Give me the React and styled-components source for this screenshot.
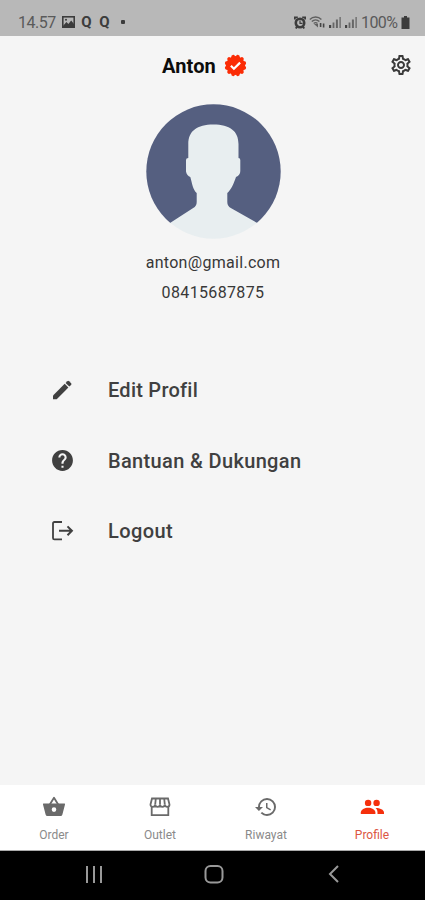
import styled, { createGlobalStyle } from "styled-components";
import { MdHelp, MdHistory, MdOutlineSettings } from "react-icons/md";

const GlobalStyle = createGlobalStyle`
  * {
    box-sizing: border-box;
  }
  body {
    margin: 0;
    font-family: Roboto, "Liberation Sans", sans-serif;
    background: #f5f5f5;
  }
`;

const Screen = styled.div`
  width: 425px;
  height: 900px;
  display: flex;
  flex-direction: column;
  overflow: hidden;
  background: #f5f5f5;
`;

const StatusBar = styled.div`
  height: 36px;
  flex-shrink: 0;
  display: flex;
  justify-content: space-between;
  padding: 12px 15px 0 18px;
  background: #b8b8b8;
`;

const StatusGroup = styled.div`
  display: flex;
  align-items: center;
  gap: ${(p) => p.$gap}px;
  height: 20px;
  color: #3c3c3c;
  svg {
    display: block;
    flex-shrink: 0;
  }
`;

const StatusText = styled.span`
  width: ${(p) => p.$width}px;
  font-size: 16px;
  letter-spacing: ${(p) => p.$spacing || 0}px;
  line-height: 20px;
  padding-top: 1px;
  white-space: nowrap;
  color: #5a5a5a;
`;

const AppMark = styled.span`
  width: 13px;
  font-size: 15px;
  font-weight: 700;
  line-height: 18px;
  text-align: center;
`;

const Dot = styled.span`
  width: 4px;
  height: 4px;
  margin-left: 5px;
  border-radius: 1px;
  background: #3c3c3c;
`;

const Header = styled.header`
  height: 58px;
  flex-shrink: 0;
  display: grid;
  grid-template-columns: 1fr auto 1fr;
  align-items: center;
  padding: 1px 12px 0 0;
`;

const Name = styled.h1`
  grid-column: 2;
  display: flex;
  align-items: center;
  gap: 8px;
  margin: 0;
  padding-right: 4px;
  font-size: 20px;
  font-weight: 700;
  line-height: 24px;
  letter-spacing: 0.1px;
  color: #0c0c0c;
`;

const SettingsButton = styled.button`
  justify-self: end;
  display: flex;
  padding: 0 0 2px;
  border: 0;
  background: none;
  color: #3a3a3a;
`;

const ProfileCard = styled.section`
  height: 261px;
  flex-shrink: 0;
  display: flex;
  flex-direction: column;
  align-items: center;
  padding: 10px 0 0 1px;
`;

const Avatar = styled.svg`
  width: 135px;
  height: 135px;
  margin-bottom: 9px;
`;

const Contact = styled.p`
  margin: 0;
  font-size: 16px;
  line-height: 30px;
  letter-spacing: ${(p) => p.$spacing || 0}px;
  color: #383838;
`;

const Menu = styled.nav`
  flex: 1;
  display: flex;
  flex-direction: column;
`;

const MenuItem = styled.a`
  height: 70.4px;
  display: grid;
  grid-template-columns: 24px 1fr;
  column-gap: 34px;
  align-items: center;
  padding-left: 50px;
  font-size: 20px;
  font-weight: 500;
  letter-spacing: ${(p) => p.$spacing || 0}px;
  color: #404040;
  svg {
    justify-self: center;
  }
`;

const TabBar = styled.nav`
  height: 66px;
  flex-shrink: 0;
  display: grid;
  grid-template-columns: repeat(4, 1fr);
  padding-left: 1px;
  background: #fff;
  border-bottom: 1px solid #aaa;
`;

const Tab = styled.a`
  display: flex;
  flex-direction: column;
  align-items: center;
  padding-top: 10px;
  font-size: 12px;
  line-height: 14px;
  color: ${(p) => (p.$active ? "#dc5643" : "#8a8a8a")};
  svg {
    margin-bottom: 9px;
    color: ${(p) => (p.$active ? "#f52f0c" : "#6a6a6a")};
  }
`;

const SystemBar = styled.div`
  height: 49px;
  flex-shrink: 0;
  display: grid;
  grid-template-columns: 120px 120px 120px;
  justify-content: center;
  align-items: center;
  justify-items: center;
  padding: 0 0 3px 2px;
  background: #000;
`;

const PictureIcon = () => (
  <svg width="13" height="12" viewBox="0 0 13 12" fill="none">
    <rect x=".8" y=".8" width="11.4" height="10.4" stroke="currentColor" strokeWidth="1.6" />
    <path d="M1 10 4.4 6l2 2 2.8-3.4L12 8v3H1z" fill="currentColor" />
    <circle cx="4" cy="3.8" r="1" fill="currentColor" />
  </svg>
);

const AlarmIcon = () => (
  <svg width="12" height="13" viewBox="0 0 12 13" fill="none">
    <path d="M.8 3.600V1.400h3M11.200 3.600V1.400h-3M1.800 12.500l1.200-2M10.200 12.500 9 10.500" stroke="currentColor" strokeWidth="1.800" />
    <circle cx="6" cy="7" r="4.200" stroke="currentColor" strokeWidth="2.600" />
    <path d="M6 4.500v2.800h2.500" stroke="currentColor" strokeWidth="1.200" />
  </svg>
);

const WifiIcon = () => (
  <svg width="17" height="14" viewBox="0 0 17 14" fill="none" stroke="#606060">
    <path d="M.8 4.400C4 1.200 9.200 1.200 12.400 4.400M2.800 6.500c2.200-2.100 5.400-2.100 7.600 0M4.700 8.500c1.100-1 2.700-1 3.800 0" strokeWidth="1.400" />
    <path d="M5 9h4v3.500z" fill="#606060" stroke="none" />
    <path d="M11.600 8v4M14.600 8.500v4" strokeWidth="1.600" stroke="#444" />
  </svg>
);

const SignalIcon = () => (
  <svg width="13" height="12" viewBox="0 0 13 12">
    <path d="M0 9h2.200v3H0z" fill="#444" />
    <path d="M3.600 6.500h1.800V12H3.600zM6.900 3.500h2V12h-2z" fill="#666" />
    <path d="M10.300 1H12v11h-1.700z" fill="#7a7a7a" />
  </svg>
);

const BatteryIcon = () => (
  <svg width="9" height="13" viewBox="0 0 9 13">
    <path d="M3 0h3v1.500h2.500V13H.5V1.500H3z" fill="currentColor" />
  </svg>
);

// twelve rounded bumps around the disc
const VerifiedBadge = () => (
  <svg width="23" height="23" viewBox="0 0 23 23">
    <g fill="#fb2c05">
      <circle cx="11.500" cy="11.500" r="9.600" />
      {Array.from({ length: 12 }, (_, i) => (
        <circle
          key={i}
          cx="11.500"
          cy="2.400"
          r="1.850"
          transform={`rotate(${i * 30 + 15} 11.500 11.500)`}
        />
      ))}
    </g>
    <path d="m6.900 11.800 3 3 6.200-6.200" fill="none" stroke="#fff" strokeWidth="2.200" />
  </svg>
);

const PencilIcon = () => (
  <svg width="24" height="24" viewBox="0 0 24 24" fill="currentColor">
    <path d="M3 17.500 14.700 5.800l3.700 3.700L6.700 21.200H3z" />
    <path d="m15.600 4.900 1.700-1.700q.9-.8 1.800 0l2 2q.8.900 0 1.700l-1.800 1.700z" />
  </svg>
);

const LogoutIcon = () => (
  <svg width="24" height="24" viewBox="0 0 24 24" fill="none" stroke="currentColor">
    <path d="M12 3H4.400Q3 3 3 4.400v14.600Q3 20.400 4.400 20.400H12" strokeWidth="1.800" />
    <path d="M9 11.800h12.500M17.500 7.400l4.400 4.400-4.400 4.400" strokeWidth="2" />
  </svg>
);

const BasketIcon = () => (
  <svg width="24" height="24" viewBox="0 0 24 24" fill="none">
    <path d="m7.800 9.500 4.200-6.700 4.200 6.700" stroke="currentColor" strokeWidth="1.800" strokeLinejoin="round" />
    <path
      fillRule="evenodd"
      d="M1.500 8.500h21q.7 0 .5.900l-2.600 10Q20 21 18.600 21H5.400Q4 21 3.600 19.400L1 9.400q-.2-.9.500-.9zM12 12.300a2.300 2.300 0 1 0 0 4.600 2.300 2.300 0 0 0 0-4.600z"
      fill="currentColor"
    />
  </svg>
);

const OutletIcon = () => (
  <svg width="24" height="24" viewBox="0 0 24 24" fill="none" stroke="currentColor" strokeWidth="1.800">
    <path d="M4 3.500h16l1.500 6q0 2.300-2.300 2.300-2.300 0-2.400-2.300 0 2.300-2.400 2.300T12 9.500q0 2.300-2.400 2.300T7.200 9.500q0 2.300-2.400 2.300T2.500 9.500z" />
    <path d="M7.800 3.500 7.200 9.500M12 3.500v6M16.200 3.500l.6 6M3.700 12v8.200h16.600V12" />
  </svg>
);

const PeopleIcon = () => (
  <svg width="24" height="24" viewBox="0 0 24 24" fill="currentColor">
    <circle cx="8.100" cy="7.900" r="3.200" />
    <circle cx="16.600" cy="7.900" r="3.200" />
    <path d="M.8 19v-1.500c0-2.900 4-4.700 7.300-4.700s7.300 1.800 7.300 4.700V19z" />
    <path d="M15.600 12.900c4.300 0 8.400 1.700 8.400 4.600V19h-6.500v-1.600c0-1.900-.5-3.200-1.900-4.500z" />
  </svg>
);

const menuItems = [
  { label: "Edit Profil", icon: <PencilIcon />, spacing: 0.25 },
  { label: "Bantuan & Dukungan", icon: <MdHelp size={25} />, spacing: 0.35 },
  { label: "Logout", icon: <LogoutIcon />, spacing: 0.4 },
];

const tabs = [
  { label: "Order", icon: <BasketIcon /> },
  { label: "Outlet", icon: <OutletIcon /> },
  { label: "Riwayat", icon: <MdHistory size={24} /> },
  { label: "Profile", icon: <PeopleIcon />, active: true },
];

const App = () => {
  return (
    <>
      <GlobalStyle />
      <Screen>
        <StatusBar>
          <StatusGroup $gap={5}>
            <StatusText $width={39} $spacing={-0.5}>14.57</StatusText>
            <PictureIcon />
            <AppMark>Q</AppMark>
            <AppMark>Q</AppMark>
            <Dot />
          </StatusGroup>
          <StatusGroup $gap={3}>
            <AlarmIcon />
            <WifiIcon />
            <SignalIcon />
            <SignalIcon />
            <StatusText $width={37} $spacing={-0.6}>100%</StatusText>
            <BatteryIcon />
          </StatusGroup>
        </StatusBar>
        <Header>
          <Name>
            Anton
            <VerifiedBadge />
          </Name>
          <SettingsButton aria-label="Pengaturan">
            <MdOutlineSettings size={24} />
          </SettingsButton>
        </Header>
        <ProfileCard>
          <Avatar viewBox="0 0 135 135">
            <defs>
              <clipPath id="round">
                <circle cx="67.500" cy="67.500" r="67.200" />
              </clipPath>
            </defs>
            <g clipPath="url(#round)">
              <path d="M0 0h135v119H0z" fill="#555f80" />
              <path
                d="M42.300 54V40C42.300 27 51 20.500 67.400 20.500S92.500 27 92.500 40v14q1.800 0 1.800 2v11q0 4-4.300 6C88 79 85 86 81.300 89v9q0 4 3.500 6l26.500 15 8 16H16l8-16 23.200-15q3.500-2 3.500-6v-9C47 86 46 79 44.300 73 40 71 40 67 40 67V56q0-2 2.300-2z"
                fill="#e8eef0"
              />
            </g>
          </Avatar>
          <Contact $spacing={0.3}>anton@gmail.com</Contact>
          <Contact $spacing={0.35}>08415687875</Contact>
        </ProfileCard>
        <Menu>
          {menuItems.map((item) => (
            <MenuItem key={item.label} $spacing={item.spacing}>
              {item.icon}
              {item.label}
            </MenuItem>
          ))}
        </Menu>
        <TabBar>
          {tabs.map((tab) => (
            <Tab key={tab.label} $active={tab.active}>
              {tab.icon}
              {tab.label}
            </Tab>
          ))}
        </TabBar>
        <SystemBar>
          <svg width="20" height="20" viewBox="0 0 20 20" stroke="#999" strokeWidth="2">
            <path d="M3 2v17M10 2v17M17 2v17" />
          </svg>
          <svg width="20" height="20" viewBox="0 0 20 20" fill="none" stroke="#999" strokeWidth="2">
            <rect x="1.500" y="2" width="17" height="16.500" rx="5" />
          </svg>
          <svg width="20" height="20" viewBox="0 0 20 20" fill="none" stroke="#999" strokeWidth="2">
            <path d="m14 2-8 8 8 8" />
          </svg>
        </SystemBar>
      </Screen>
    </>
  );
};

export default App;
